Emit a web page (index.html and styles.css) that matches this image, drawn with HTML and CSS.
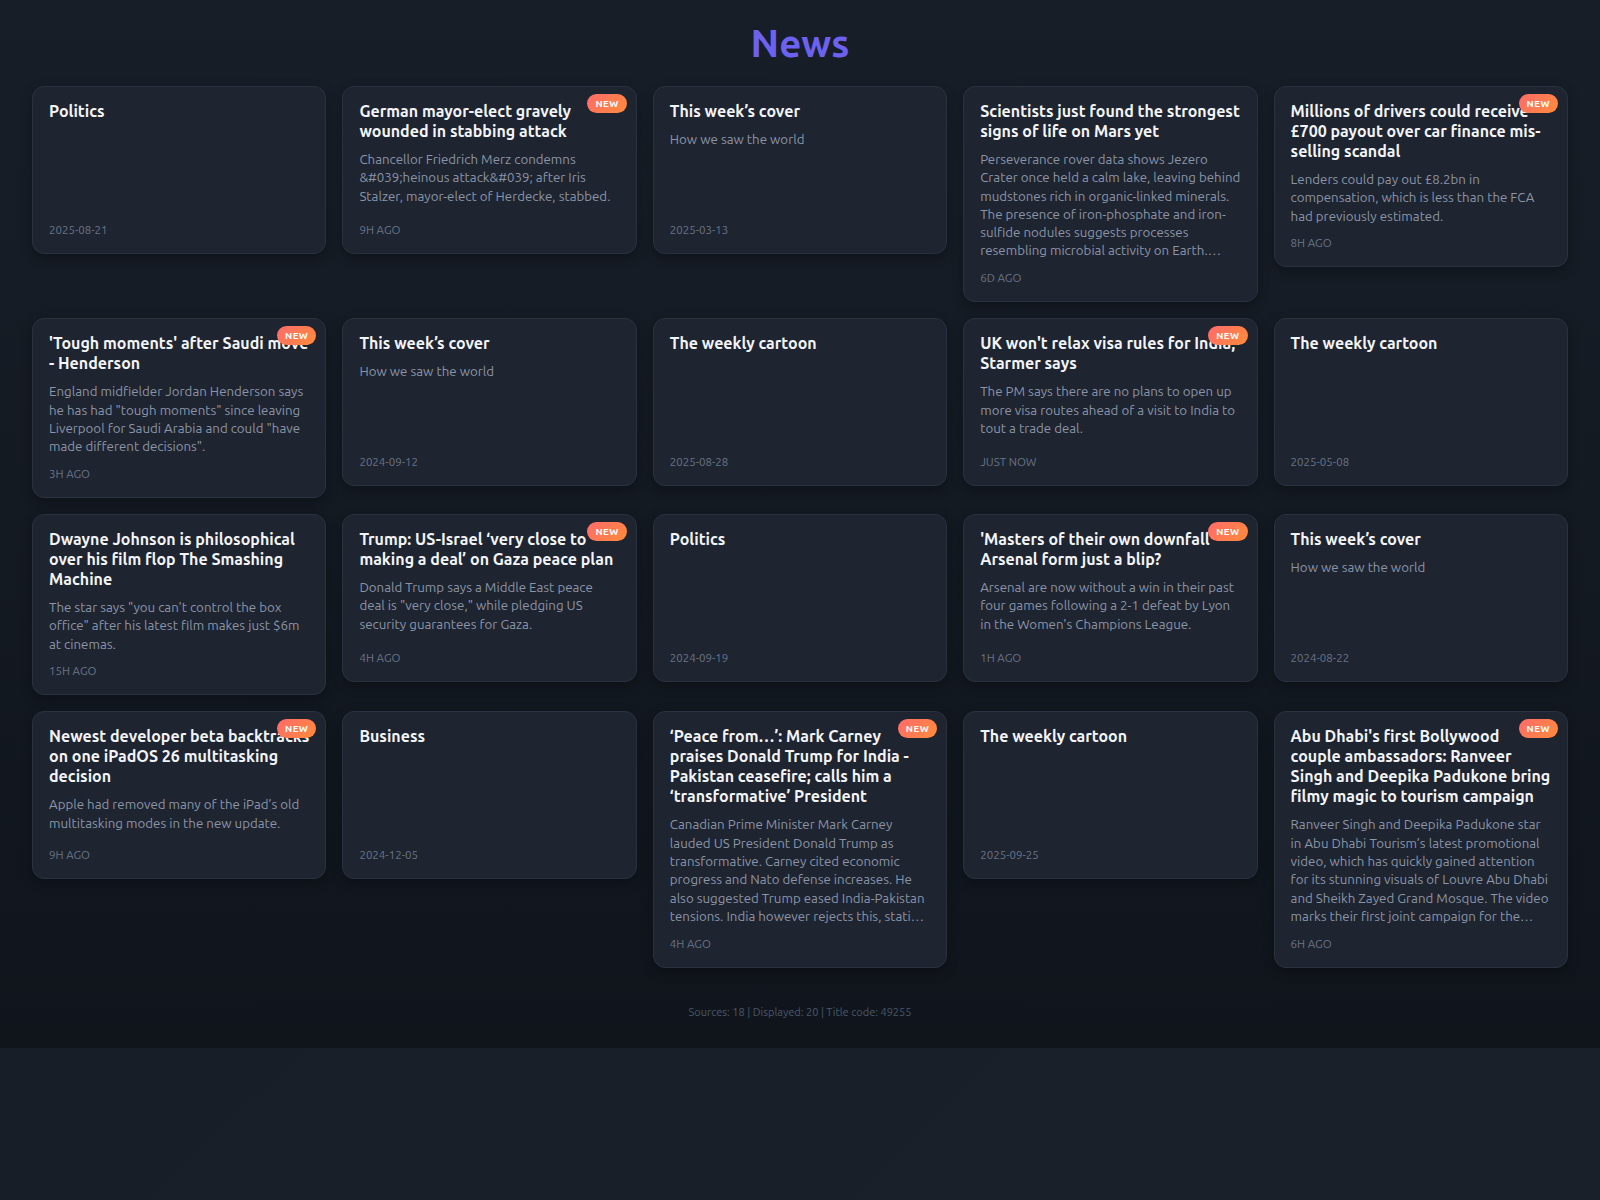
FILE: index.html
```html
<!DOCTYPE html>
<html lang="en">
<head>
    <meta charset="UTF-8">
    <meta name="viewport" content="width=device-width, initial-scale=1.0">
    <title>News</title>
    <link rel="stylesheet" href="styles.css">
</head>
<body>
    <div class="page">
        <h1 class="page-title">News</h1>
        <div class="news-grid">
            <article class="news-card">
                <h2 class="card-title">Politics</h2>
                <div class="card-meta">2025-08-21</div>
            </article>
            <article class="news-card">
                <span class="badge">NEW</span>
                <h2 class="card-title">German mayor-elect gravely wounded in stabbing attack</h2>
                <p class="card-desc">Chancellor Friedrich Merz condemns &amp;#039;heinous attack&amp;#039; after Iris Stalzer, mayor-elect of Herdecke, stabbed.</p>
                <div class="card-meta">9H AGO</div>
            </article>
            <article class="news-card">
                <h2 class="card-title">This week’s cover</h2>
                <p class="card-desc">How we saw the world</p>
                <div class="card-meta">2025-03-13</div>
            </article>
            <article class="news-card">
                <h2 class="card-title">Scientists just found the strongest signs of life on Mars yet</h2>
                <p class="card-desc">Perseverance rover data shows Jezero Crater once held a calm lake, leaving behind mudstones rich in organic-linked minerals. The presence of iron-phosphate and iron-sulfide nodules suggests processes resembling microbial activity on Earth. Scientists say the find is the clearest hint yet of ancient life on the red planet.</p>
                <div class="card-meta">6D AGO</div>
            </article>
            <article class="news-card">
                <span class="badge">NEW</span>
                <h2 class="card-title">Millions of drivers could receive £700 payout over car finance mis-selling scandal</h2>
                <p class="card-desc">Lenders could pay out £8.2bn in compensation, which is less than the FCA had previously estimated.</p>
                <div class="card-meta">8H AGO</div>
            </article>

            <article class="news-card">
                <span class="badge">NEW</span>
                <h2 class="card-title">'Tough moments' after Saudi move - Henderson</h2>
                <p class="card-desc">England midfielder Jordan Henderson says he has had "tough moments" since leaving Liverpool for Saudi Arabia and could "have made different decisions".</p>
                <div class="card-meta">3H AGO</div>
            </article>
            <article class="news-card">
                <h2 class="card-title">This week’s cover</h2>
                <p class="card-desc">How we saw the world</p>
                <div class="card-meta">2024-09-12</div>
            </article>
            <article class="news-card">
                <h2 class="card-title">The weekly cartoon</h2>
                <div class="card-meta">2025-08-28</div>
            </article>
            <article class="news-card">
                <span class="badge">NEW</span>
                <h2 class="card-title">UK won't relax visa rules for India, Starmer says</h2>
                <p class="card-desc">The PM says there are no plans to open up more visa routes ahead of a visit to India to tout a trade deal.</p>
                <div class="card-meta">JUST NOW</div>
            </article>
            <article class="news-card">
                <h2 class="card-title">The weekly cartoon</h2>
                <div class="card-meta">2025-05-08</div>
            </article>

            <article class="news-card">
                <h2 class="card-title">Dwayne Johnson is philosophical over his film flop The Smashing Machine</h2>
                <p class="card-desc">The star says "you can't control the box office" after his latest film makes just $6m at cinemas.</p>
                <div class="card-meta">15H AGO</div>
            </article>
            <article class="news-card">
                <span class="badge">NEW</span>
                <h2 class="card-title">Trump: US-Israel ‘very close to making a deal’ on Gaza peace plan</h2>
                <p class="card-desc">Donald Trump says a Middle East peace deal is "very close," while pledging US security guarantees for Gaza.</p>
                <div class="card-meta">4H AGO</div>
            </article>
            <article class="news-card">
                <h2 class="card-title">Politics</h2>
                <div class="card-meta">2024-09-19</div>
            </article>
            <article class="news-card">
                <span class="badge">NEW</span>
                <h2 class="card-title">'Masters of their own downfall' - Arsenal form just a blip?</h2>
                <p class="card-desc">Arsenal are now without a win in their past four games following a 2-1 defeat by Lyon in the Women's Champions League.</p>
                <div class="card-meta">1H AGO</div>
            </article>
            <article class="news-card">
                <h2 class="card-title">This week’s cover</h2>
                <p class="card-desc">How we saw the world</p>
                <div class="card-meta">2024-08-22</div>
            </article>

            <article class="news-card">
                <span class="badge">NEW</span>
                <h2 class="card-title">Newest developer beta backtracks on one iPadOS 26 multitasking decision</h2>
                <p class="card-desc">Apple had removed many of the iPad’s old multitasking modes in the new update.</p>
                <div class="card-meta">9H AGO</div>
            </article>
            <article class="news-card">
                <h2 class="card-title">Business</h2>
                <div class="card-meta">2024-12-05</div>
            </article>
            <article class="news-card">
                <span class="badge">NEW</span>
                <h2 class="card-title">‘Peace from…’: Mark Carney praises Donald Trump for India - Pakistan ceasefire; calls him a ‘transformative’ President</h2>
                <p class="card-desc">Canadian Prime Minister Mark Carney lauded US President Donald Trump as transformative. Carney cited economic progress and Nato defense increases. He also suggested Trump eased India-Pakistan tensions. India however rejects this, stating that the ceasefire was agreed bilaterally.</p>
                <div class="card-meta">4H AGO</div>
            </article>
            <article class="news-card">
                <h2 class="card-title">The weekly cartoon</h2>
                <div class="card-meta">2025-09-25</div>
            </article>
            <article class="news-card">
                <span class="badge">NEW</span>
                <h2 class="card-title">Abu Dhabi's first Bollywood couple ambassadors: Ranveer Singh and Deepika Padukone bring filmy magic to tourism campaign</h2>
                <p class="card-desc">Ranveer Singh and Deepika Padukone star in Abu Dhabi Tourism’s latest promotional video, which has quickly gained attention for its stunning visuals of Louvre Abu Dhabi and Sheikh Zayed Grand Mosque. The video marks their first joint campaign for the emirate.</p>
                <div class="card-meta">6H AGO</div>
            </article>
        </div>
        <div class="footer-info">Sources: 18 | Displayed: 20 | Title code: 49255</div>
    </div>
</body>
</html>
```

FILE: styles.css
```css
* {
    box-sizing: border-box;
}
body {
    margin: 0;
    background: linear-gradient(135deg, #171d27 0%, #19202a 100%);
    font-family: "Ubuntu", "Lato", sans-serif;
    color: #f1f3f6;
    min-height: 100vh;
}
.page {
    padding: 23px 32px 29px;
    background: linear-gradient(180deg, #181e28 0%, #10151c 100%);
}
.page-title {
    margin: 0 0 23px;
    text-align: center;
    font-size: 38.4px;
    line-height: 40px;
    font-weight: 700;
    color: #6c62ef;
}
.news-grid {
    display: grid;
    grid-template-columns: repeat(5, 1fr);
    gap: 16px;
    align-items: start;
}
.news-card {
    position: relative;
    display: flex;
    flex-direction: column;
    min-height: 168px;
    padding: 14px 16px 16px;
    background-color: #1e2430;
    border: 1px solid #2a3240;
    border-radius: 12px;
    box-shadow: 0 4px 12px rgba(0, 0, 0, 0.3);
}
.card-title {
    margin: 0;
    font-size: 16px;
    line-height: 20px;
    font-weight: 700;
    color: #f2f4f7;
}
.card-desc {
    margin: 10px 0 9.5px;
    font-size: 13.3px;
    line-height: 18.3px;
    color: #8b95a7;
    display: -webkit-box;
    -webkit-line-clamp: 6;
    -webkit-box-orient: vertical;
    overflow: hidden;
}
.card-meta {
    margin-top: auto;
    font-size: 11.5px;
    line-height: 15px;
    color: #6a7588;
    text-transform: uppercase;
}
.badge {
    position: absolute;
    top: 7px;
    right: 9px;
    z-index: 1;
    padding: 4px 8px;
    border-radius: 10px;
    background: linear-gradient(135deg, #ff6a6a 0%, #ff8c3a 100%);
    color: #fff;
    font-size: 9.6px;
    line-height: 11px;
    font-weight: 700;
    letter-spacing: 0.5px;
}
.footer-info {
    margin-top: 37px;
    text-align: center;
    font-size: 11px;
    line-height: 14px;
    color: #4b586b;
}
```
